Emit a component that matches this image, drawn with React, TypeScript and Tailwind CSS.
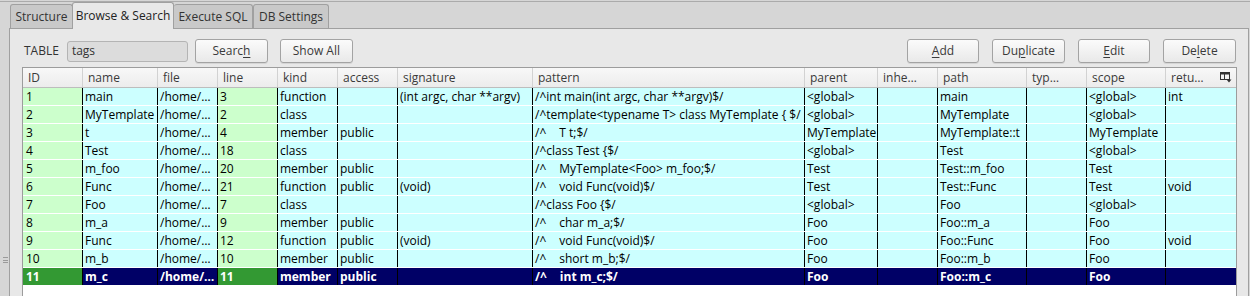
import React from "react";

const COLS = [59, 75, 60, 60, 60, 60, 135, 272, 73, 60, 89, 60, 79, 71];
const HEAD = ["ID", "name", "file", "line", "kind", "access", "signature", "pattern", "parent", "inhe…", "path", "typ…", "scope", "retu…"];

const ROWS: string[][] = [
  ["1", "main", "/home/…", "3", "function", "", "(int argc, char **argv)", "/^int main(int argc, char **argv)$/", "<global>", "", "main", "", "<global>", "int"],
  ["2", "MyTemplate", "/home/…", "2", "class", "", "", "/^template<typename T> class MyTemplate { $/", "<global>", "", "MyTemplate", "", "<global>", ""],
  ["3", "t", "/home/…", "4", "member", "public", "", "/^\tT t;$/", "MyTemplate", "", "MyTemplate::t", "", "MyTemplate", ""],
  ["4", "Test", "/home/…", "18", "class", "", "", "/^class Test {$/", "<global>", "", "Test", "", "<global>", ""],
  ["5", "m_foo", "/home/…", "20", "member", "public", "", "/^\tMyTemplate<Foo> m_foo;$/", "Test", "", "Test::m_foo", "", "Test", ""],
  ["6", "Func", "/home/…", "21", "function", "public", "(void)", "/^\tvoid Func(void)$/", "Test", "", "Test::Func", "", "Test", "void"],
  ["7", "Foo", "/home/…", "7", "class", "", "", "/^class Foo {$/", "<global>", "", "Foo", "", "<global>", ""],
  ["8", "m_a", "/home/…", "9", "member", "public", "", "/^\tchar m_a;$/", "Foo", "", "Foo::m_a", "", "Foo", ""],
  ["9", "Func", "/home/…", "12", "function", "public", "(void)", "/^\tvoid Func(void)$/", "Foo", "", "Foo::Func", "", "Foo", "void"],
  ["10", "m_b", "/home/…", "10", "member", "public", "", "/^\tshort m_b;$/", "Foo", "", "Foo::m_b", "", "Foo", ""],
  ["11", "m_c", "/home/…", "11", "member", "public", "", "/^\tint m_c;$/", "Foo", "", "Foo::m_c", "", "Foo", ""],
];

const GRID = "grid grid-cols-[59px_75px_60px_60px_60px_60px_135px_272px_73px_60px_89px_60px_79px_71px]";

function Cell({ text }: { text: string }) {
  if (text.includes("\t")) {
    const [a, b] = text.split("\t");
    return (
      <>
        {a}
        <span className="inline-block w-[13px]" />
        {b}
      </>
    );
  }
  return <>{text}</>;
}

function Btn({ children, w }: { children: React.ReactNode; w: string }) {
  return (
    <div
      className={`${w} h-[24px] flex items-center justify-center rounded-[3px] border border-[#a3a3a3] bg-gradient-to-b from-[#fbfbfb] to-[#e9e9e9] text-[#3a3a3a] shadow-[0_1px_0_rgba(0,0,0,0.08)]`}
    >
      {children}
    </div>
  );
}

function ColIcon() {
  return (
    <svg width="12" height="11" viewBox="0 0 12 11" className="shrink-0">
      <rect x="0.5" y="0.5" width="9" height="7" fill="none" stroke="#333" strokeWidth="1" />
      <rect x="0.5" y="0.5" width="9" height="2" fill="#333" />
      <line x1="4.5" y1="2" x2="4.5" y2="8" stroke="#333" strokeWidth="1" />
      <path d="M6.5 7.5 H11.5 L9 10.5 Z" fill="#333" />
    </svg>
  );
}

export default function App() {
  return (
    <div
      className="w-[1250px] h-[296px] overflow-hidden bg-[#d6d6d6] flex flex-col text-[12px] leading-none text-black"
      style={{ fontFamily: '"Open Sans", "Noto Sans", sans-serif' }}
    >
      <div className="h-[1px] shrink-0" />
      <div className="h-[1px] shrink-0 bg-[#ababab]" />
      {/* Tabs */}
      <div className="h-[26px] shrink-0 flex items-end pl-[10px] text-[#333]">
        <div className="w-[63px] h-[24px] flex items-center justify-center bg-[#c9c9c9] border border-b-0 border-[#a0a0a0] rounded-t-[3px]">
          Structure
        </div>
        <div className="relative z-10 w-[102px] h-[27px] mb-[-1px] flex items-center justify-center bg-[#e8e8e8] border border-b-0 border-[#a0a0a0] rounded-t-[3px] ml-[-1px] text-[#222]">
          Browse &amp; Search
        </div>
        <div className="w-[79px] h-[24px] flex items-center justify-center bg-[#c9c9c9] border border-b-0 border-l-0 border-[#a0a0a0] rounded-t-[3px]">
          Execute SQL
        </div>
        <div className="w-[76px] h-[24px] flex items-center justify-center bg-[#c9c9c9] border border-b-0 border-[#a0a0a0] rounded-t-[3px]">
          DB Settings
        </div>
      </div>
      {/* Body */}
      <div className="flex-1 flex min-h-0">
        <div className="w-[9px] shrink-0 flex flex-col pl-[3px]">
          <div className="mt-[229px] flex flex-col gap-[1.5px]">
            <div className="w-[5px] h-[1px] bg-[#9a9a9a]" />
            <div className="w-[5px] h-[1px] bg-[#9a9a9a]" />
            <div className="w-[5px] h-[1px] bg-[#9a9a9a]" />
          </div>
        </div>
        <div className="w-[1240px] shrink-0 border border-b-0 border-[#a0a0a0] bg-[#e8e8e8] flex flex-col pl-[12px] pr-[11px]">
          {/* Toolbar */}
          <div className="mt-[10px] h-[24px] flex items-center shrink-0">
            <span className="ml-[2px] text-[#333]">TABLE</span>
            <div className="ml-[8px] w-[121px] h-[21px] rounded-[3px] border border-[#b4b4b4] bg-[#dcdcdc] flex items-center pl-[4px] text-[#333]">
              tags
            </div>
            <div className="ml-[7px]">
              <Btn w="w-[73px]">
                Searc<span className="underline underline-offset-2">h</span>
              </Btn>
            </div>
            <div className="ml-[12px]">
              <Btn w="w-[73px]">Show All</Btn>
            </div>
            <div className="flex-1" />
            <div className="flex gap-[13px] mr-[1px]">
              <Btn w="w-[72px]">
                <span className="underline underline-offset-2">A</span>dd
              </Btn>
              <Btn w="w-[73px]">
                Du<span className="underline underline-offset-2">p</span>licate
              </Btn>
              <Btn w="w-[72px]">
                <span className="underline underline-offset-2">E</span>dit
              </Btn>
              <Btn w="w-[73px]">
                De<span className="underline underline-offset-2">l</span>ete
              </Btn>
            </div>
          </div>
          {/* Table */}
          <div className="mt-[4px] w-[1215px] flex-1 bg-white border border-b-0 border-[#9c9c9c] flex flex-col overflow-hidden">
            <div className={`${GRID} h-[20px] shrink-0 bg-gradient-to-b from-[#f8f8f8] to-[#ececec] border-b border-[#bdbdbd] text-[#3a3a3a]`}>
              {HEAD.map((h, i) => (
                <div
                  key={i}
                  className={`flex items-center pl-[5px] overflow-hidden whitespace-nowrap ${i > 0 ? "border-l border-[#d2d2d2]" : ""}`}
                >
                  <span className="flex-1">{h}</span>
                  {i === HEAD.length - 1 && (
                    <span className="mr-[4px]">
                      <ColIcon />
                    </span>
                  )}
                </div>
              ))}
            </div>
            {ROWS.map((r, ri) => {
              const sel = ri === ROWS.length - 1;
              return (
                <div key={ri} className={`${GRID} h-[18px] shrink-0 border-b border-white`}>
                  {r.map((c, ci) => {
                    const green = ci === 0 || ci === 3;
                    const bg = sel
                      ? green
                        ? "bg-[#339933]"
                        : "bg-[#000066]"
                      : green
                      ? "bg-[#ccffcc]"
                      : "bg-[#ccffff]";
                    return (
                      <div
                        key={ci}
                        className={`${bg} flex items-center overflow-hidden whitespace-nowrap ${
                          ci > 0 ? "border-l border-black pl-[2px]" : "pl-[3px]"
                        } ${sel ? "text-white font-bold" : "text-black"}`}
                      >
                        <Cell text={c} />
                      </div>
                    );
                  })}
                </div>
              );
            })}
          </div>
        </div>
      </div>
    </div>
  );
}
